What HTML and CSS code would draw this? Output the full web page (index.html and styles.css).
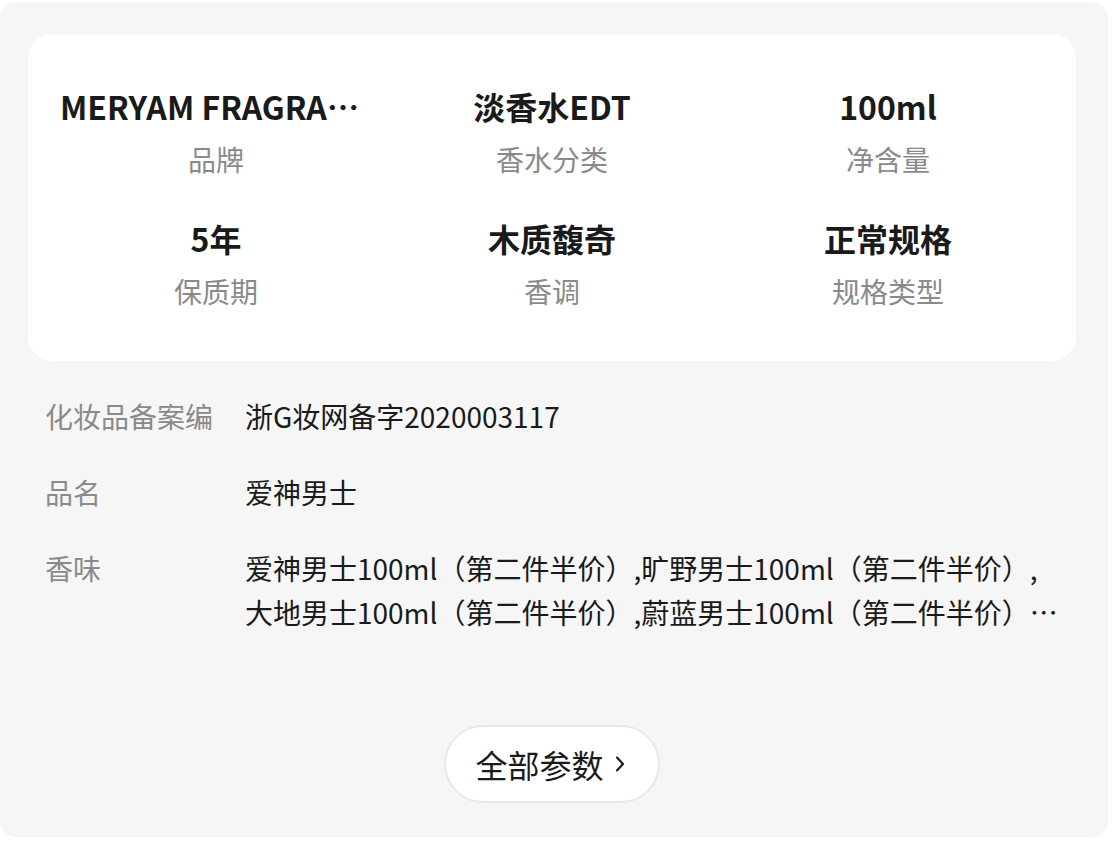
FILE: index.html
```html
<!DOCTYPE html>
<html lang="zh-CN">
<head>
  <meta charset="UTF-8" />
  <meta name="viewport" content="width=device-width, initial-scale=1.0"/>
  <title>商品参数</title>
  <link rel="stylesheet" href="styles.css">
</head>
<body>
  <div class="panel">
    <div class="key-card">
      <div class="key-item">
        <div class="key-value">MERYAM FRAGRANCE</div>
        <div class="key-label">品牌</div>
      </div>
      <div class="key-item">
        <div class="key-value">淡香水EDT</div>
        <div class="key-label">香水分类</div>
      </div>
      <div class="key-item">
        <div class="key-value">100ml</div>
        <div class="key-label">净含量</div>
      </div>
      <div class="key-item">
        <div class="key-value">5年</div>
        <div class="key-label">保质期</div>
      </div>
      <div class="key-item">
        <div class="key-value">木质馥奇</div>
        <div class="key-label">香调</div>
      </div>
      <div class="key-item">
        <div class="key-value">正常规格</div>
        <div class="key-label">规格类型</div>
      </div>
    </div>

    <div class="param-list">
      <div class="param-row">
        <div class="param-name">化妆品备案编</div>
        <div class="param-text">浙G妆网备字2020003117</div>
      </div>
      <div class="param-row">
        <div class="param-name">品名</div>
        <div class="param-text">爱神男士</div>
      </div>
      <div class="param-row">
        <div class="param-name">香味</div>
        <div class="param-text clamp">爱神男士100ml（第二件半价）,旷野男士100ml（第二件半价）,大地男士100ml（第二件半价）,蔚蓝男士100ml（第二件半价）…</div>
      </div>
    </div>

    <div class="more-wrap">
      <button class="more-btn">全部参数
        <svg class="chevron" width="10" height="16" viewBox="0 0 10 16"><path d="M2 1.5 L8 8 L2 14.5" fill="none" stroke="#1a1a1a" stroke-width="2.1" stroke-linecap="round" stroke-linejoin="round"/></svg>
      </button>
    </div>
  </div>
</body>
</html>
```

FILE: styles.css
```css
body {
  margin: 0;
  background-color: #fff;
  font-family: "Noto Sans CJK SC", "Noto Sans", sans-serif;
  color: #1a1a1a;
}
.panel {
  width: 1108px;
  margin-top: 2px;
  padding: 32px 32px 34px 28px;
  box-sizing: border-box;
  background-color: #f6f6f6;
  border-radius: 16px;
}
.key-card {
  display: grid;
  grid-template-columns: repeat(3, 1fr);
  row-gap: 36px;
  padding: 49px 20px 50px;
  background-color: #fff;
  border-radius: 24px;
}
.key-item {
  display: flex;
  flex-direction: column;
  align-items: center;
  gap: 10px;
  padding: 0 12px;
  min-width: 0;
}
.key-value {
  max-width: 100%;
  font-size: 32px;
  line-height: 46px;
  font-weight: bold;
  color: #1a1a1a;
  white-space: nowrap;
  overflow: hidden;
  text-overflow: ellipsis;
}
.key-label {
  font-size: 28px;
  line-height: 40px;
  color: #8a8a8a;
}
.param-list {
  display: flex;
  flex-direction: column;
  gap: 32px;
  margin-top: 33px;
  padding: 0 0 0 17px;
}
.param-row {
  display: flex;
  font-size: 28px;
  line-height: 44px;
}
.param-name {
  width: 200px;
  flex-shrink: 0;
  color: #8a8a8a;
}
.param-text {
  width: 816px;
  color: #1a1a1a;
}
.clamp {
  display: -webkit-box;
  -webkit-line-clamp: 2;
  -webkit-box-orient: vertical;
  overflow: hidden;
}
.more-wrap {
  display: flex;
  justify-content: center;
  margin-top: 91px;
}
.more-btn {
  display: flex;
  align-items: center;
  gap: 11px;
  height: 78px;
  padding: 0 33px 0 29px;
  background-color: #fff;
  border: 2px solid #e8e8e8;
  border-radius: 39px;
  font-family: inherit;
  font-size: 32px;
  color: #1a1a1a;
  cursor: pointer;
}
.chevron {
  display: block;
}
```
